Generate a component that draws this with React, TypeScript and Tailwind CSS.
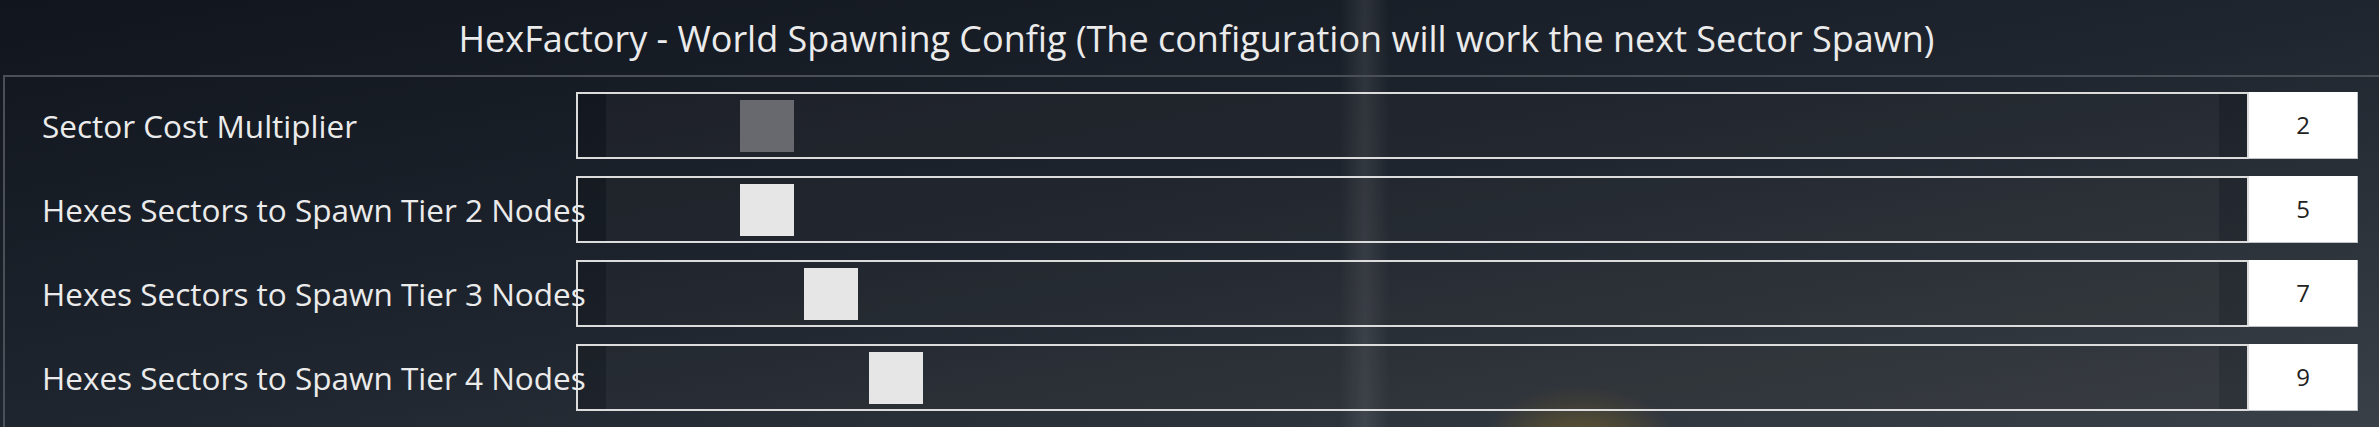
type Row = {
  label: string;
  value: number;
  thumb: string;
  active?: boolean;
};

const rows: Row[] = [
  { label: 'Sector Cost Multiplier', value: 2, thumb: 'ml-[134px]', active: true },
  { label: 'Hexes Sectors to Spawn Tier 2 Nodes', value: 5, thumb: 'ml-[134px]' },
  { label: 'Hexes Sectors to Spawn Tier 3 Nodes', value: 7, thumb: 'ml-[198px]' },
  { label: 'Hexes Sectors to Spawn Tier 4 Nodes', value: 9, thumb: 'ml-[263px]' },
];

function SliderRow({ row }: { row: Row }) {
  return (
    <div className="flex h-[67px] items-center">
      <div className="relative z-10 w-[534px] shrink-0 whitespace-nowrap text-[31.5px] leading-none text-[#ebebeb]">
        {row.label}
      </div>
      <div className="flex h-full flex-1 border-2 border-[#dcdcdc] bg-black/15 px-[28px]">
        <div className="flex h-full flex-1 items-center bg-white/[0.045]">
          <div
            className={`${row.thumb} h-[52px] w-[54px] ${row.active ? 'bg-[#67696f]' : 'bg-[#e6e6e6]'}`}
          />
        </div>
      </div>
      <div className="flex h-full w-[109px] shrink-0 items-center justify-center border-r border-b border-[#bfc3c7] bg-white text-[24px] text-[#222]">
        {row.value}
      </div>
    </div>
  );
}

export default function App() {
  return (
    <div
      className="relative h-[427px] w-[2379px] overflow-hidden bg-linear-to-br from-[#10151e] via-[#1f252e] to-[#3a4047]"
      style={{ fontFamily: '"Open Sans", "Noto Sans", sans-serif' }}
    >
      {/* light streak and glow behind the panel */}
      <div className="pointer-events-none absolute top-0 left-[1340px] h-full w-[50px] bg-linear-to-r from-transparent via-white/[0.09] to-transparent" />
      <div className="pointer-events-none absolute top-[385px] left-[1480px] h-[130px] w-[200px] rounded-full bg-[radial-gradient(closest-side,rgba(190,140,20,0.4),transparent)]" />

      <div className="relative">
        <div className="flex h-[75px] justify-center pt-[21px] pl-[14px]">
          <h1 className="text-[36px] leading-[36px] text-[#ebebeb]">
            HexFactory - World Spawning Config (The configuration will work the next Sector Spawn)
          </h1>
        </div>
        <div className="ml-[3px] border-t-2 border-l-2 border-[#4b5058] pt-[15px] pr-[21px] pb-[40px] pl-[37px]">
          <div className="flex flex-col gap-[17px]">
            {rows.map((r) => (
              <SliderRow key={r.label} row={r} />
            ))}
          </div>
        </div>
      </div>
    </div>
  );
}
